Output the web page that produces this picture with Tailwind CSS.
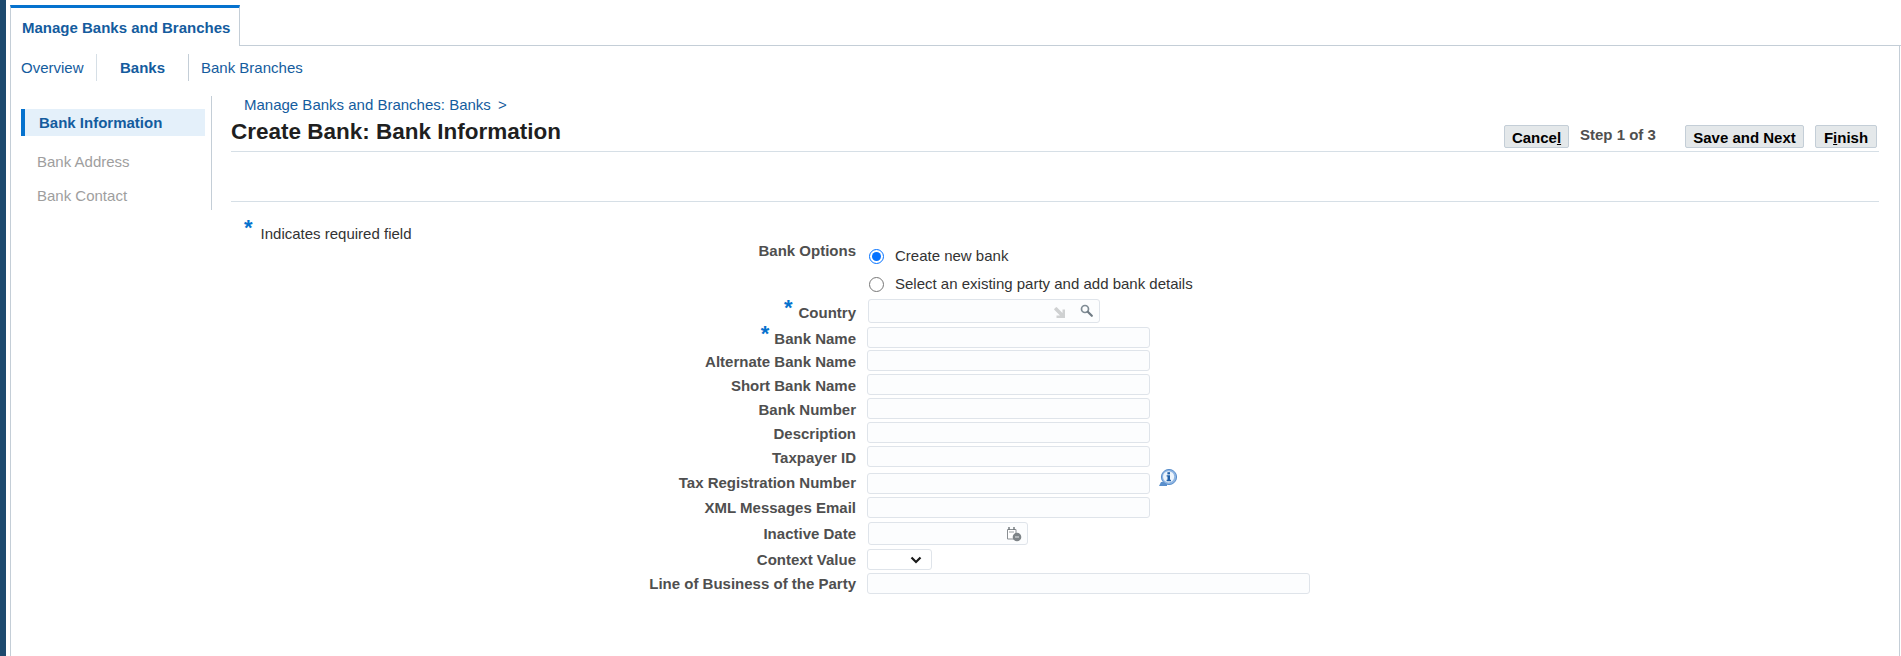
<!DOCTYPE html>
<html lang="en">
<head>
<meta charset="utf-8">
<title>Create Bank</title>
<script src="https://cdn.jsdelivr.net/npm/@tailwindcss/browser@4"></script>
</head>
<body class="bg-white font-['Liberation_Sans',Arial,sans-serif] text-[15px] overflow-hidden">
<div class="flex h-[656px] w-[1901px]">
  <div class="w-[6px] shrink-0 bg-[#1d4a6e]"></div>
  <div class="w-[4px] shrink-0"></div>
  <div class="flex-1 min-w-0 flex flex-col pt-[5px]">
    <div class="flex h-[41px] shrink-0">
      <div class="w-[230px] border-t-[3px] border-t-[#0572ce] border-x border-x-[#c4ced7] pl-[11px] leading-[40px] font-bold text-[#145c9e] whitespace-nowrap">Manage Banks and Branches</div>
      <div class="flex-1 border-b border-[#c4ced7]"></div>
    </div>
    <div class="flex-1 border-l border-r border-[#c4ced7] mr-[1px] -mt-px pt-[9px] min-h-0">
      <div class="flex h-[27px] items-center text-[#145c9e]">
        <span class="ml-[10px] w-[75px] pt-[1px]">Overview</span>
        <span class="w-px h-[27px] bg-[#d6dfe6]"></span>
        <span class="ml-[23px] w-[68px] font-bold pt-[1px]">Banks</span>
        <span class="w-px h-[27px] bg-[#c4ced7]"></span>
        <span class="ml-[12px] pt-[1px]">Bank Branches</span>
      </div>
      <div class="flex mt-[15px]">
        <div class="ml-[10px] w-[191px] h-[114px] shrink-0 border-r border-[#c4ced7] pt-[13px]">
          <div class="w-[184px] h-[27px] bg-[#e4f0fa] border-l-[4px] border-[#0572ce] pl-[14px] leading-[28px] font-bold text-[#145c9e]">Bank Information</div>
          <div class="pl-[16px] mt-[12px] h-[28px] leading-[28px] text-[#9e9e9e]">Bank Address</div>
          <div class="pl-[16px] mt-[6px] h-[28px] leading-[28px] text-[#9e9e9e]">Bank Contact</div>
        </div>
        <div class="w-[1648px] ml-[19px] shrink-0">
          <div class="pl-[13px] h-[18px] leading-[18px] text-[#145c9e]">Manage Banks and Branches: Banks <span class="ml-[3px]">&gt;</span></div>
          <div class="flex h-[38px] border-b border-[#d6dfe6] relative">
            <h1 class="text-[22.5px] leading-[36px] font-bold text-[#1f1f1f] whitespace-nowrap">Create Bank: Bank Information</h1>
            <div class="ml-auto flex mt-[11px] h-[23px]">
              <button class="w-[65px] h-[23px] bg-[#e4e8ea] border border-[#c4ced7] rounded-[2px] font-bold text-black leading-[23px]">Cance<u>l</u></button>
              <span class="ml-[11px] w-[105px] font-bold text-[#4f4f4f] leading-[20px]">Step 1 of 3</span>
              <button class="w-[119px] h-[23px] bg-[#e4e8ea] border border-[#c4ced7] rounded-[2px] font-bold text-black leading-[23px]">Save and Next</button>
              <button class="ml-[11px] mr-[2px] w-[62px] h-[23px] bg-[#e4e8ea] border border-[#c4ced7] rounded-[2px] font-bold text-black leading-[23px]">F<u>i</u>nish</button>
            </div>
          </div>
          <div class="h-[50px] border-b border-[#d6dfe6]"></div>
          <div class="pl-[13px] flex h-[30px] pt-[15px]">
            <span class="text-[#0572ce] font-bold text-[22px] leading-[22px]">*</span>
            <span class="ml-[8px] text-[#333333] leading-[18px] mt-[8px]">Indicates required field</span>
          </div>
        </div>
      </div>
      <div class="text-[#4f4f4f] font-bold">
        <div class="flex h-[26px] mt-[12px]">
          <div class="w-[845px] mr-[12px] text-right leading-[14px]">Bank Options</div>
          <label class="flex items-center h-[24px] font-normal text-[#333333]"><input type="radio" name="o" checked class="ml-px w-[15px] h-[15px] m-0 accent-[#0572ff]"><span class="ml-[11px]">Create new bank</span></label>
        </div>
        <div class="flex h-[28px]">
          <div class="w-[845px] mr-[12px]"></div>
          <label class="flex items-center h-[28px] font-normal text-[#333333]"><input type="radio" name="o" class="ml-px w-[15px] h-[15px] m-0"><span class="ml-[11px]">Select an existing party and add bank details</span></label>
        </div>
        <div class="flex h-[28px]">
          <div class="w-[845px] mr-[12px] text-right leading-[26px]"><span class="text-[#0572ce] text-[22px] leading-[20px] align-[3px] mr-[6px]">*</span>Country</div>
          <div class="mt-px w-[232px] h-[24px] bg-[#fcfdfe] border border-[#dfe4ea] rounded-[3px] flex items-center justify-end">
            <svg class="mr-[14px] mt-[3px]" width="12" height="12" viewBox="0 0 12 12"><path d="M1 1 L2.6 0 L8.5 6 V2.5 H11 V11 H2.5 V8.5 H6 L0 2.6 Z" fill="#cfd1d2"/></svg>
            <svg class="mr-[6px] -mt-[2px]" width="13" height="13" viewBox="0 0 13 13"><circle cx="5" cy="5" r="3.5" fill="none" stroke="#7f8b94" stroke-width="1.7"/><path d="M7.8 7.8 L11.8 11.8" stroke="#6f7b84" stroke-width="2.2" stroke-linecap="round"/></svg>
          </div>
        </div>
        <div class="flex h-[23px]">
          <div class="w-[845px] mr-[11px] text-right leading-[23px] -mt-[2px]"><span class="text-[#0572ce] text-[22px] leading-[20px] align-[3px] mr-[5px]">*</span>Bank Name</div>
          <div class="mt-px w-[283px] h-[21px] bg-[#fcfdfe] border border-[#dfe4ea] rounded-[3px]"></div>
        </div>
        <div class="flex h-[24px]">
          <div class="w-[845px] mr-[11px] text-right leading-[26px]">Alternate Bank Name</div>
          <div class="mt-px w-[283px] h-[21px] bg-[#fcfdfe] border border-[#dfe4ea] rounded-[3px]"></div>
        </div>
        <div class="flex h-[24px]">
          <div class="w-[845px] mr-[11px] text-right leading-[26px]">Short Bank Name</div>
          <div class="mt-px w-[283px] h-[21px] bg-[#fcfdfe] border border-[#dfe4ea] rounded-[3px]"></div>
        </div>
        <div class="flex h-[24px]">
          <div class="w-[845px] mr-[11px] text-right leading-[26px]">Bank Number</div>
          <div class="mt-px w-[283px] h-[21px] bg-[#fcfdfe] border border-[#dfe4ea] rounded-[3px]"></div>
        </div>
        <div class="flex h-[24px]">
          <div class="w-[845px] mr-[11px] text-right leading-[26px]">Description</div>
          <div class="mt-px w-[283px] h-[21px] bg-[#fcfdfe] border border-[#dfe4ea] rounded-[3px]"></div>
        </div>
        <div class="flex h-[27px]">
          <div class="w-[845px] mr-[11px] text-right leading-[26px]">Taxpayer ID</div>
          <div class="mt-px w-[283px] h-[21px] bg-[#fcfdfe] border border-[#dfe4ea] rounded-[3px]"></div>
        </div>
        <div class="flex h-[24px]">
          <div class="w-[845px] mr-[11px] text-right leading-[22px]">Tax Registration Number</div>
          <div class="mt-px w-[283px] h-[21px] bg-[#fcfdfe] border border-[#dfe4ea] rounded-[3px]"></div>
          <svg class="ml-[8px] -mt-[3px]" width="20" height="18" viewBox="0 0 20 18"><path d="M3 13 L1 17 H9 V13 Z" fill="#5a8fcc"/><circle cx="11" cy="8" r="7.6" fill="#8fb5e2" stroke="#5a8fcc"/><circle cx="10.6" cy="7.8" r="5.6" fill="#eef5fc"/><rect x="9.4" y="3.2" width="2.6" height="2.2" fill="#1f5fa8"/><path d="M8.6 6.2 H12 V10.8 H13 V12.2 H8.6 V10.8 H9.5 V7.6 H8.6 Z" fill="#1f5fa8"/></svg>
        </div>
        <div class="flex h-[25px]">
          <div class="w-[845px] mr-[11px] text-right leading-[24px]">XML Messages Email</div>
          <div class="mt-px w-[283px] h-[21px] bg-[#fcfdfe] border border-[#dfe4ea] rounded-[3px]"></div>
        </div>
        <div class="flex h-[27px]">
          <div class="w-[845px] mr-[12px] text-right leading-[26px]">Inactive Date</div>
          <div class="mt-px w-[160px] h-[23px] bg-[#fcfdfe] border border-[#dfe4ea] rounded-[3px] flex items-center justify-end">
            <svg class="mr-[5px]" width="16" height="16" viewBox="0 0 16 16"><path d="M1.5 3.5 H10 V13 H1.5 Z" fill="#fff" stroke="#8a8f93"/><path d="M3 1 V4 M8 1 V4" stroke="#6f7579" stroke-width="1.4"/><path d="M3 6 H8" stroke="#9aa0a4"/><circle cx="11" cy="11" r="4.3" fill="#7d8387"/><path d="M9 11 H13" stroke="#e6e8ea" stroke-width="1"/></svg>
          </div>
        </div>
        <div class="flex h-[24px]">
          <div class="w-[845px] mr-[11px] text-right leading-[24px]">Context Value</div>
          <div class="relative mt-px w-[65px] h-[21px]">
            <select class="w-full h-full appearance-none bg-white border border-[#dfe4ea] rounded-[3px]"><option></option></select>
            <svg class="absolute right-[10px] top-[7px] pointer-events-none" width="12" height="8" viewBox="0 0 12 8"><path d="M1.5 1.5 L6 6 L10.5 1.5" fill="none" stroke="#1a1a1a" stroke-width="2.2"/></svg>
          </div>
        </div>
        <div class="flex h-[24px]">
          <div class="w-[845px] mr-[11px] text-right leading-[24px]">Line of Business of the Party</div>
          <div class="mt-px w-[443px] h-[21px] bg-[#fcfdfe] border border-[#dfe4ea] rounded-[3px]"></div>
        </div>
      </div>
    </div>
  </div>
</div>
</body>
</html>
